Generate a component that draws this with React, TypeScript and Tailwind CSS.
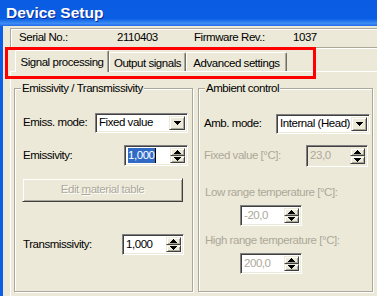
import React from 'react';

const font = "font-['Liberation_Sans',Arial,sans-serif] text-[11.5px] tracking-[-0.45px]";

const Tri = ({ up }: { up?: boolean }) => (
  <svg width="7" height="4" viewBox="0 0 7 4" shapeRendering="crispEdges">
    <path d={up ? 'M3 0h1v1h1v1h1v1h1v1H0V3h1V2h1V1h1z' : 'M0 0h7v1H6v1H5v1H4v1H3V3H2V2H1V1H0z'} fill="#000" />
  </svg>
);

const sunken =
  'border border-t-[#808080] border-l-[#808080] border-r-white border-b-white shadow-[inset_1px_1px_0_#404040,inset_-1px_-1px_0_#ece9d8]';
const raised =
  'border border-t-[#ece9d8] border-l-[#ece9d8] border-r-[#404040] border-b-[#404040] shadow-[inset_1px_1px_0_#fff,inset_-1px_-1px_0_#aca899] bg-[#ece9d8]';

const Select = ({ value, w }: { value: string; w: string }) => (
  <div className={`${w} h-[20px] ${sunken} bg-white flex items-center p-[2px]`}>
    <span className="flex-1 pl-[1px] leading-none">{value}</span>
    <div className={`w-[16px] h-full ${raised} flex items-center justify-center`}>
      <Tri />
    </div>
  </div>
);

const Spinner = ({
  value,
  w,
  h = 'h-[21px]',
  disabled,
  selected,
  bg = 'bg-white',
}: {
  value: string;
  w: string;
  h?: string;
  disabled?: boolean;
  selected?: boolean;
  bg?: string;
}) => (
  <div className={`${w} ${h} ${sunken} ${bg} flex items-stretch p-[2px]`}>
    <div className="flex-1 flex items-center pl-[1px]">
      {selected ? (
        <>
          <span className="bg-[#316ac5] text-white leading-[15px]">{value}</span>
          <span className="w-px h-[15px] bg-black" />
        </>
      ) : (
        <span className={disabled ? 'text-[#aca899]' : ''}>{value}</span>
      )}
    </div>
    <div className="w-[15px] flex flex-col">
      <div className={`flex-1 ${raised} flex items-center justify-center`}>
        <Tri up />
      </div>
      <div className={`flex-1 ${raised} flex items-center justify-center`}>
        <Tri />
      </div>
    </div>
  </div>
);

const Group = ({ title, w, children }: { title: string; w: string; children: React.ReactNode }) => (
  <div className={`relative ${w} h-[204px] border border-[#aca899] shadow-[inset_1px_1px_0_#fff,1px_1px_0_#fff] flex flex-col`}>
    <span className="absolute -top-[8px] left-[6px] bg-[#ece9d8] px-px leading-[15px]">{title}</span>
    {children}
  </div>
);

const tab =
  'border-l border-t border-r border-l-white border-t-white border-r-[#716f64] shadow-[inset_-1px_0_0_#aca899] rounded-t-[2px] flex justify-center';

export default function App() {
  return (
    <div className={`relative w-[377px] h-[296px] overflow-hidden whitespace-nowrap bg-[#ece9d8] flex flex-col text-black ${font}`}>
      <div className="h-[26px] shrink-0 flex items-center pl-[6px] bg-[linear-gradient(to_bottom,#0a5de3_0%,#0a5ee4_72%,#3d8df5_90%,#2569e8_100%)]">
        <span className="font-bold text-[15.5px] tracking-normal text-white [text-shadow:1px_1px_0_#0b2a9a]">
          Device Setup
        </span>
      </div>

      <div className="flex-1 flex flex-col border-l-[3px] border-[#0b5fe6] pl-[7px] pt-[2px]">
        <div className="h-[20px] shrink-0 flex items-center pl-[8px] border border-[#aca899] shadow-[inset_1px_1px_0_#fff,1px_1px_0_#fff] -mr-[4px]">
          <span className="w-[98px]">Serial No.:</span>
          <span className="w-[77px]">2110403</span>
          <span className="w-[99px]">Firmware Rev.:</span>
          <span>1037</span>
        </div>

        <div className="h-[23px] shrink-0 flex items-end pl-[5px]">
          <div className={`relative z-10 -mb-px w-[94px] h-[22px] bg-[#ece9d8] ${tab} pt-[3px]`}>Signal processing</div>
          <div className={`w-[77px] h-[19px] ${tab} pt-[2px]`}>Output signals</div>
          <div className={`w-[101px] h-[19px] ${tab} pt-[2px]`}>Advanced settings</div>
        </div>

        <div className="flex-1 border-l border-t border-white pl-[3px] pt-[16px] flex gap-[5px]">
          <Group title="Emissivity / Transmissivity" w="w-[179px]">
            <div className="mt-[24px] flex items-center pl-[8px]">
              <span className="w-[72px]">Emiss. mode:</span>
              <Select value="Fixed value" w="w-[93px]" />
            </div>
            <div className="mt-[12px] flex items-center pl-[8px]">
              <span className="w-[101px]">Emissivity:</span>
              <Spinner value="1,000" w="w-[64px]" selected />
            </div>
            <div className={`mt-[12px] ml-[7px] w-[161px] h-[24px] ${raised} flex items-center justify-center`}>
              <span className="text-[#aca899] [text-shadow:1px_1px_0_#fff]">
                Edit <span className="underline">m</span>aterial table
              </span>
            </div>
            <div className="mt-[32px] flex items-center pl-[8px]">
              <span className="w-[99px]">Transmissivity:</span>
              <Spinner value="1,000" w="w-[62px]" />
            </div>
          </Group>

          <Group title="Ambient control" w="w-[175px]">
            <div className="mt-[25px] flex items-center pl-[5px]">
              <span className="w-[72px]">Amb. mode:</span>
              <Select value="Internal (Head)" w="w-[94px]" />
            </div>
            <div className="mt-[11px] flex items-center pl-[5px]">
              <span className="w-[102px] text-[#aca899]">Fixed value [°C]:</span>
              <Spinner value="23,0" w="w-[62px]" h="h-[22px]" disabled bg="bg-[#ece9d8]" />
            </div>
            <div className="mt-[18px] pl-[6px] text-[#aca899] leading-[15px]">Low range temperature [°C]:</div>
            <div className="mt-[5px] pl-[41px]">
              <Spinner value="-20,0" w="w-[62px]" disabled />
            </div>
            <div className="mt-[7px] pl-[6px] text-[#aca899] leading-[15px]">High range temperature [°C]:</div>
            <div className="mt-[5px] pl-[41px]">
              <Spinner value="200,0" w="w-[62px]" disabled />
            </div>
          </Group>
        </div>
      </div>

      <div className="absolute left-[5px] top-[47px] w-[311px] h-[32px] border-[3px] border-[#ff0000] pointer-events-none" />
    </div>
  );
}
